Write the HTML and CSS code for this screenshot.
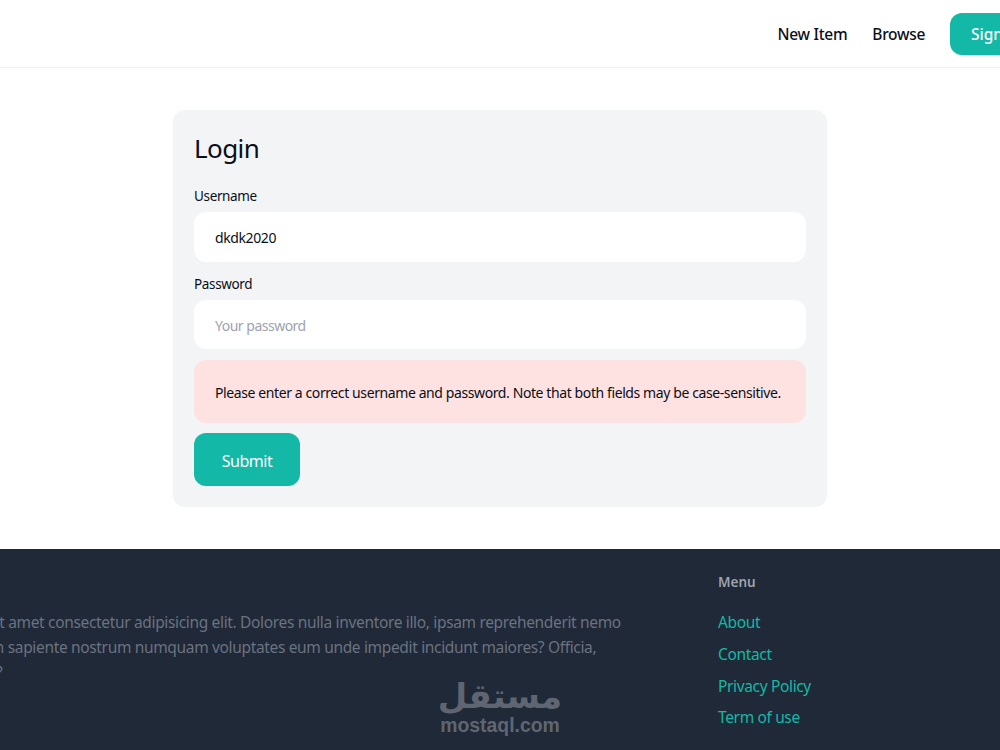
FILE: index.html
```html
<!DOCTYPE html>
<html lang="en">

<head>
    <meta charset="UTF-8">
    <title>Login</title>
    <link rel="stylesheet" href="styles.css">
</head>

<body>
    <div class="page">
        <nav class="navbar">
            <a class="nav-link" href="#">New Item</a>
            <a class="nav-link" href="#">Browse</a>
            <a class="nav-button" href="#">Sign up</a>
        </nav>

        <main class="content">
            <form class="login-card">
                <h1>Login</h1>
                <label for="username">Username</label>
                <input type="text" id="username" value="dkdk2020">
                <label for="password">Password</label>
                <input type="password" id="password" placeholder="Your password">
                <div class="error-box">Please enter a correct username and password. Note that both fields may be case-sensitive.</div>
                <button type="submit">Submit</button>
            </form>
        </main>

        <footer class="footer">
            <div class="footer-about">
                <h3>About</h3>
                <p>Lorem ipsum dolor sit amet consectetur adipisicing elit. Dolores nulla inventore illo, ipsam reprehenderit nemo<br>
                    quisquam ullam enim sapiente nostrum numquam voluptates eum unde impedit incidunt maiores? Officia,<br>
                    dolorem quas rerum?</p>
            </div>
            <div class="footer-menu">
                <h3>Menu</h3>
                <ul>
                    <li><a href="#">About</a></li>
                    <li><a href="#">Contact</a></li>
                    <li><a href="#">Privacy Policy</a></li>
                    <li><a href="#">Term of use</a></li>
                </ul>
            </div>
        </footer>
    </div>

    <div class="watermark">
        <span class="watermark-ar" lang="ar" dir="rtl">مستقل</span>
        <span class="watermark-en">mostaql.com</span>
    </div>
</body>

</html>
```

FILE: styles.css
```css
html,
body {
    margin: 0;
    height: 750px;
    overflow: hidden;
}

body {
    font-family: 'Noto Sans', 'Open Sans', sans-serif;
    color: #0b0f17;
    background: #ffffff;
}

.page {
    width: 1440px;
    margin-left: -220px;
}

.navbar {
    display: flex;
    justify-content: flex-end;
    align-items: center;
    gap: 25px;
    height: 67px;
    padding-right: 173px;
    border-bottom: 1px solid #f0f1f3;
}

.nav-link {
    color: #0b0f17;
    font-size: 15.5px;
    font-weight: 500;
    letter-spacing: -0.3px;
    text-decoration: none;
}

.nav-button {
    display: block;
    width: 97px;
    box-sizing: border-box;
    height: 42px;
    padding-left: 21px;
    line-height: 42px;
    background: #14b8a6;
    color: #ffffff;
    border-radius: 12px;
    font-size: 15.5px;
    font-weight: 500;
    white-space: nowrap;
    text-decoration: none;
}

.content {
    padding: 42px 0;
}

.login-card {
    width: 612px;
    margin: 0 auto;
    padding: 21px;
    background: #f3f4f6;
    border-radius: 12px;
}

h1 {
    margin: 0 0 20px;
    font-size: 26px;
    line-height: 34px;
    font-weight: 400;
    letter-spacing: -0.6px;
}

label {
    display: block;
    padding-top: 1px;
    margin-bottom: 5px;
    font-size: 13.5px;
    line-height: 21px;
    letter-spacing: -0.35px;
}

input {
    display: block;
    box-sizing: border-box;
    width: 100%;
    height: 50px;
    margin-bottom: 11px;
    padding: 0 21px;
    border: none;
    border-radius: 12px;
    background: #ffffff;
    color: #0b0f17;
    font-family: inherit;
    font-size: 14px;
    letter-spacing: -0.4px;
}

input:last-of-type {
    height: 49px;
    padding-top: 2px;
}

input::placeholder {
    color: #9ca3af;
    letter-spacing: -0.5px;
}

.error-box {
    box-sizing: border-box;
    height: 63px;
    padding: 0 21px;
    line-height: 65px;
    background: #fee2e2;
    border-radius: 12px;
    font-size: 14px;
    letter-spacing: -0.4px;
    white-space: nowrap;
}

button {
    display: block;
    width: 106px;
    height: 53px;
    margin-top: 10px;
    padding-top: 3px;
    background: #14b8a6;
    color: #ffffff;
    border: none;
    border-radius: 12px;
    font-family: inherit;
    font-size: 16px;
    letter-spacing: -0.45px;
}

.footer {
    display: flex;
    height: 201px;
    box-sizing: border-box;
    padding: 24px 0 0 72px;
    background: #1f2937;
    color: #6b7280;
}

.footer-about {
    width: 866px;
}

.footer h3 {
    margin: 0;
    font-size: 13.5px;
    line-height: 18px;
    font-weight: 600;
    color: #9ca3af;
}

.footer-about h3 {
    visibility: hidden;
}

.footer-about p {
    margin: 19px 0 0;
    font-size: 15.5px;
    line-height: 25px;
    letter-spacing: -0.34px;
    white-space: nowrap;
}

.footer-menu ul {
    margin: 16px 0 0;
    padding: 0;
    list-style: none;
}

.footer-menu li {
    font-size: 15.5px;
    line-height: 31.8px;
    letter-spacing: -0.35px;
}

.footer-menu a {
    color: #14b8a6;
    text-decoration: none;
}

/* site stamp sits on top of the footer */
.watermark {
    position: absolute;
    left: 420px;
    top: 677px;
    width: 160px;
    display: flex;
    flex-direction: column;
    align-items: center;
    color: #5f6672;
    pointer-events: none;
}

.watermark-ar {
    font-family: 'DejaVu Sans', sans-serif;
    font-size: 34px;
    line-height: 38px;
    font-weight: 700;
}

.watermark-en {
    font-family: 'Liberation Sans', sans-serif;
    font-size: 19.4px;
    line-height: 20px;
    font-weight: 700;
}
```
